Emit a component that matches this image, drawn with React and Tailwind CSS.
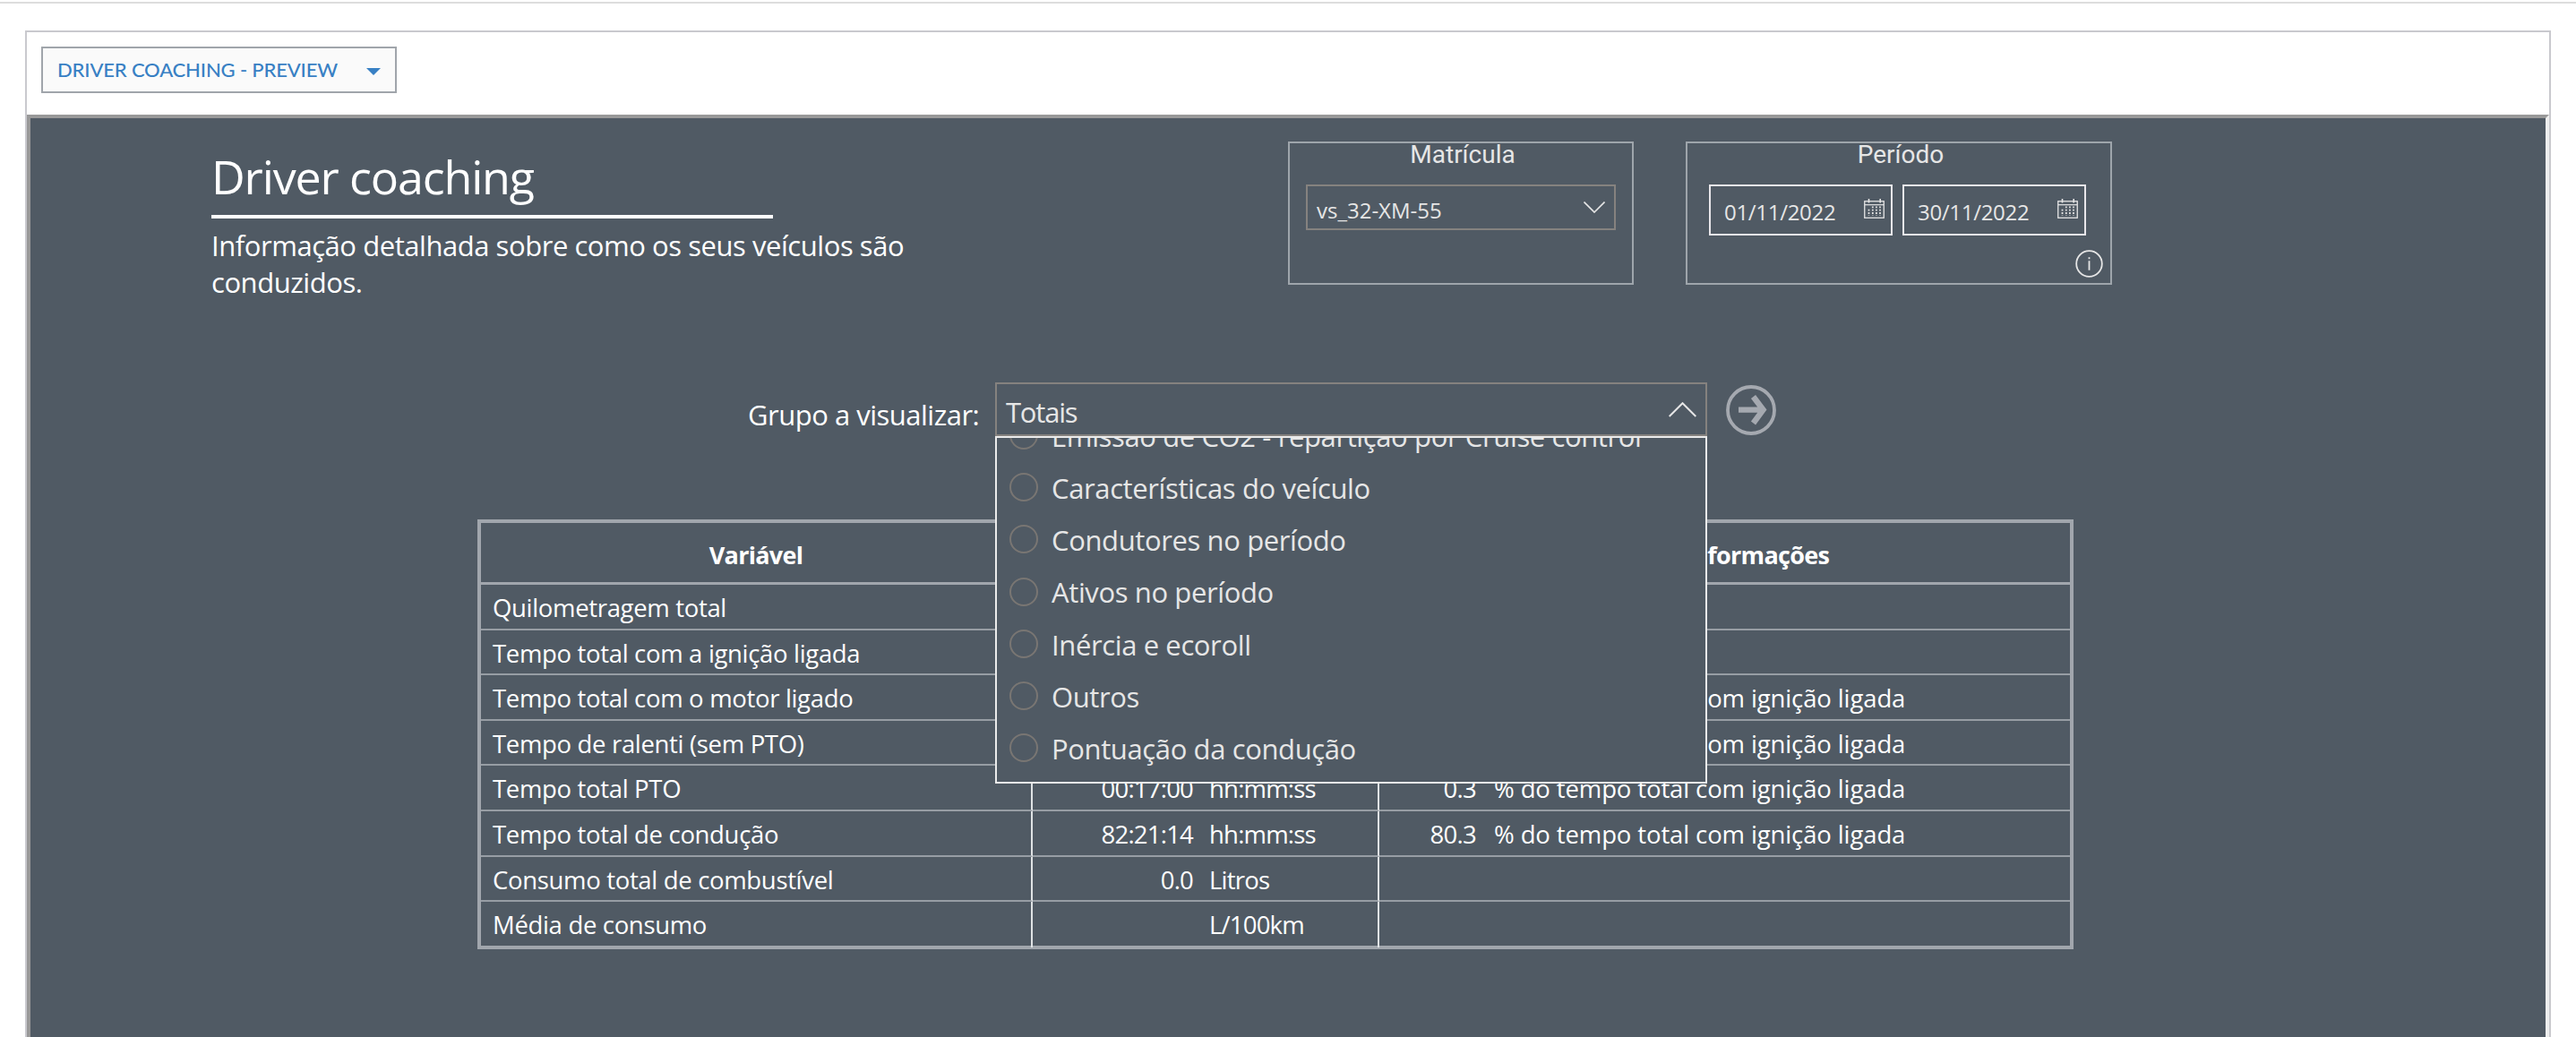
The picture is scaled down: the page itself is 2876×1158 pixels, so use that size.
import React from "react";

const options = [
  "Emissão de CO2 - repartição por Cruise control",
  "Características do veículo",
  "Condutores no período",
  "Ativos no período",
  "Inércia e ecoroll",
  "Outros",
  "Pontuação da condução",
];

const ignition = "% do tempo total com ignição ligada";

const rows = [
  { name: "Quilometragem total" },
  { name: "Tempo total com a ignição ligada" },
  { name: "Tempo total com o motor ligado", info: ignition },
  { name: "Tempo de ralenti (sem PTO)", info: ignition },
  { name: "Tempo total PTO", value: "00:17:00", unit: "hh:mm:ss", share: "0.3", info: ignition },
  { name: "Tempo total de condução", value: "82:21:14", unit: "hh:mm:ss", share: "80.3", info: ignition },
  { name: "Consumo total de combustível", value: "0.0", unit: "Litros" },
  { name: "Média de consumo", unit: "L/100km" },
];

function CalendarIcon() {
  return (
    <svg width="23" height="22" viewBox="0 0 23 22" fill="none" stroke="currentColor" className="-mt-[3px] shrink-0">
      <rect x="0.75" y="2.75" width="21.5" height="18.5" strokeWidth="1.3" />
      <path d="M1 6.7h21" strokeWidth="1.2" />
      <path d="M5.5 0v4.5M18.2 0v4.5" strokeWidth="1.6" />
      <path d="M9.8 8.5v10.5M13.9 8.5v10.5M18 8.5v10.5" strokeWidth="1.7" strokeDasharray="1.8 1.5" />
      <path d="M5.5 11.8v7.2" strokeWidth="1.7" strokeDasharray="1.8 1.5" />
    </svg>
  );
}

function DateInput({ value }) {
  return (
    <div className="flex h-[57px] w-[205px] items-center justify-between border-2 border-[#e8e6ea] pl-[15px] pr-[7px]">
      <span className="pt-1 text-2xl tracking-[-0.3px]">{value}</span>
      <CalendarIcon />
    </div>
  );
}

function FilterBox({ title, className, children }) {
  return (
    <div className={`mt-[26px] h-40 border-2 border-[#9ea5ab] text-[#e6e6e6] ${className}`}>
      <div className="pl-1 text-center font-['Roboto',sans-serif] text-[28px] leading-[26px]">{title}</div>
      {children}
    </div>
  );
}

function Header() {
  return (
    <div className="flex h-[200px] pl-[202px]">
      <div className="w-[820px] shrink-0 pt-[33px]">
        <h1 className="text-[52px] leading-[64px] tracking-[-1.15px]">Driver coaching</h1>
        <div className="mt-[11px] h-1 w-[627px] bg-white" />
        <p className="mt-[10px] text-[31px] leading-[41px] tracking-[-0.45px]">
          Informação detalhada sobre como os seus veículos são conduzidos.
        </p>
      </div>

      <FilterBox title="Matrícula" className="ml-[382px] w-[386px]">
        <div className="mx-[18px] mt-5 flex h-[51px] items-center justify-between border-2 border-[#85827f] px-[10px]">
          <span className="pt-1.5 text-2xl">vs_32-XM-55</span>
          <svg width="24" height="13" viewBox="0 0 24 13" fill="none" stroke="currentColor" strokeWidth="1.6">
            <path d="M0.5 0.5 12 12 23.5 0.5" />
          </svg>
        </div>
      </FilterBox>

      <FilterBox title="Período" className="ml-[58px] w-[476px]">
        <div className="mt-5 flex gap-[11px] pl-6">
          <DateInput value="01/11/2022" />
          <DateInput value="30/11/2022" />
        </div>
        <div className="mt-4 flex justify-end pr-2">
          <svg width="31" height="31" viewBox="0 0 31 31" fill="none" stroke="currentColor" strokeWidth="1.8">
            <circle cx="15.5" cy="15.5" r="14.3" />
            <path d="M15.5 12.3v10.4M15.5 8.2v2" />
          </svg>
        </div>
      </FilterBox>
    </div>
  );
}

function GroupSelect() {
  return (
    <div className="mt-[95px] flex h-[60px] pl-[801px] text-[31px]">
      <div className="w-[276px] pt-1.5 leading-[60px] tracking-[-0.5px]">Grupo a visualizar:</div>
      <div className="relative w-[795px] border-2 border-[#85827f] text-[#e6e6e6]">
        <div className="flex h-full items-center justify-between px-[10px]">
          <span className="pt-1.5 tracking-[-1.2px]">Totais</span>
          <svg width="31" height="17" viewBox="0 0 31 17" fill="none" stroke="currentColor" strokeWidth="2">
            <path d="M0.7 16 15.5 1.2 30.3 16" />
          </svg>
        </div>
        <ul className="absolute -left-0.5 top-[58px] z-10 h-[388px] w-[795px] overflow-hidden border-2 border-[#ebebeb] bg-[#505a64]">
          {options.map((option) => (
            <li
              key={option}
              className="flex h-[58.27px] items-center gap-[15px] pl-[14px] tracking-[-0.38px] first:-mt-[32.3px]"
            >
              <span className="size-8 shrink-0 rounded-full border-2 border-[#797673]" />
              <span className="whitespace-nowrap pt-0.5">{option}</span>
            </li>
          ))}
        </ul>
      </div>
      <svg width="56" height="56" viewBox="0 0 56 56" fill="none" stroke="#a5a9b0" className="ml-[21px] mt-[3px]">
        <circle cx="28" cy="28" r="26" strokeWidth="3.8" />
        <path d="M14 27.6h26M30.5 13 41.5 27.6 30.5 42.5" strokeWidth="6.4" />
      </svg>
    </div>
  );
}

function DataTable() {
  return (
    <div className="ml-[499px] mt-[93px] h-[480px] w-[1782px] border-4 border-[#a1a6ad]">
      <div className="flex h-[69px] border-b-[3px] border-[#a1a6ad] pt-[5px] text-[27px] font-bold leading-[62px] tracking-[-0.7px]">
        <div className="w-[614px] text-center">Variável</div>
        <div className="ml-[389px] w-[771px] pl-1.5 text-center">Mais informações</div>
      </div>
      {rows.map((row) => (
        <div key={row.name} className="group flex h-[50.6px] text-[27.5px] leading-[52px] tracking-[-0.33px]">
          <div className="w-[616px] border-b-2 border-r-2 border-b-[#979da4] border-r-[#dfe2e4] pl-[13px] group-last:border-b-0">
            {row.name}
          </div>
          <div className="flex w-[387px] gap-[18px] border-b-2 border-r-2 border-b-[#979da4] border-r-[#dfe2e4] tracking-[-0.8px] group-last:border-b-0">
            <span className="w-[179px] text-right">{row.value}</span>
            <span>{row.unit}</span>
          </div>
          <div className="flex flex-1 gap-5 border-b-2 border-[#979da4] group-last:border-b-0">
            <span className="w-[108px] text-right tracking-[-0.7px]">{row.share}</span>
            <span className="tracking-[-0.12px]">{row.info}</span>
          </div>
        </div>
      ))}
    </div>
  );
}

export default function App() {
  return (
    <div className="h-screen overflow-hidden bg-white pt-0.5 font-['Open_Sans',sans-serif]">
      <div className="h-0.5 bg-[#dddddd]" />
      <div className="ml-7 mt-[30px] flex h-[1200px] w-[2820px] flex-col border-2 border-[#c9c9ce]">
        <div className="h-[92px] pl-4 pt-4">
          <button className="flex h-[52px] w-[397px] items-center justify-between border-2 border-[#a0a5ab] bg-[#fafafa] pl-4 pr-4 font-['Lato',sans-serif] text-[22px] font-medium tracking-[-0.15px] text-[#3880c4]">
            <span className="pb-0.5">DRIVER COACHING - PREVIEW</span>
            <svg width="16" height="8" viewBox="0 0 16 8" fill="currentColor" className="mt-[3px]">
              <path d="M0 0h16L8 8z" />
            </svg>
          </button>
        </div>
        <div className="flex-1 border-4 border-b-0 border-l-[#999999] border-r-[#eeeeee] border-t-[#999999] bg-[#505a64] text-white">
          <Header />
          <GroupSelect />
          <DataTable />
        </div>
      </div>
    </div>
  );
}
